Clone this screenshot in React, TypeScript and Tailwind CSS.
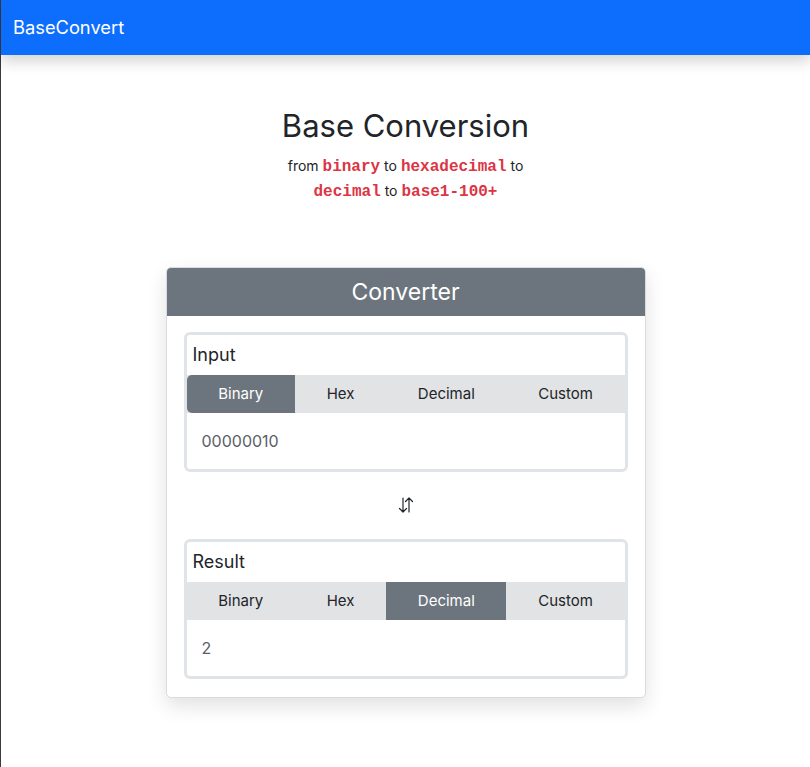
import { useState } from 'react';

const bases = ['Binary', 'Hex', 'Decimal', 'Custom'];

type PanelProps = {
  label: string;
  active: string;
  value: string;
  onPick: (b: string) => void;
};

const Panel = ({ label, active, value, onPick }: PanelProps) => (
  <div className="rounded-md border-[3px] border-[#e0e3e7] bg-white overflow-hidden">
    <div className="px-[6px] h-[40px] flex items-center text-[18px] text-[#212529]">{label}</div>
    <div className="flex bg-[#e2e3e5]">
      {bases.map((b) => (
        <button
          key={b}
          onClick={() => onPick(b)}
          className={`flex-auto h-[38px] px-4 text-[15px] text-center ${
            b === active ? 'bg-[#6c757d] text-white' : 'text-[#212529]'
          } ${b === active && b === 'Binary' ? 'rounded-l-[5px]' : ''}`}
        >
          {b}
        </button>
      ))}
    </div>
    <div className="h-[56px] flex items-center px-[15px] text-[16px] text-[#5a6067]">{value}</div>
  </div>
);

const Code = ({ children }: { children: React.ReactNode }) => (
  <code className="font-['Liberation_Mono',monospace] font-bold text-[#dc3545] text-[16px]">{children}</code>
);

export default function App() {
  const [from, setFrom] = useState('Binary');
  const [to, setTo] = useState('Decimal');

  return (
    <div className="min-h-screen bg-white border-l border-[#3a3a3a] font-['Inter',sans-serif]">
      <nav className="h-[55px] bg-[#0d6efd] flex items-center px-3 shadow-[0_6px_14px_rgba(0,0,0,0.18)] relative">
        <span className="text-white text-[18.3px]">BaseConvert</span>
      </nav>

      <div className="flex flex-col items-center pt-[52px]">
        <h1 className="text-[31px] text-[#212529] leading-tight">Base Conversion</h1>
        <p className="mt-[8px] text-[14px] leading-[24px] text-[#212529] text-center">
          from <Code>binary</Code> to <Code>hexadecimal</Code> to
          <br />
          <Code>decimal</Code> to <Code>base1-100+</Code>
        </p>

        <div className="mt-[63px] w-[480px] rounded-[5px] border border-[#d8dbdf] bg-white shadow-[0_8px_20px_rgba(0,0,0,0.12)] overflow-hidden">
          <div className="h-[48px] bg-[#6c757d] flex items-center justify-center text-white text-[23px]">
            Converter
          </div>
          <div className="px-[17px] pt-[16px] pb-[18px]">
            <Panel label="Input" active={from} value="00000010" onPick={setFrom} />
            <div className="h-[67px] flex items-center justify-center">
              <svg width="18" height="18" viewBox="0 0 18 18" fill="none" stroke="#212529" strokeWidth="1.2" strokeLinecap="round" strokeLinejoin="round">
                <path d="M6 2v14M2.5 12.5 6 16l3.5-3.5" />
                <path d="M12 16V2M8.5 5.5 12 2l3.5 3.5" />
              </svg>
            </div>
            <Panel label="Result" active={to} value="2" onPick={setTo} />
          </div>
        </div>
      </div>
    </div>
  );
}
